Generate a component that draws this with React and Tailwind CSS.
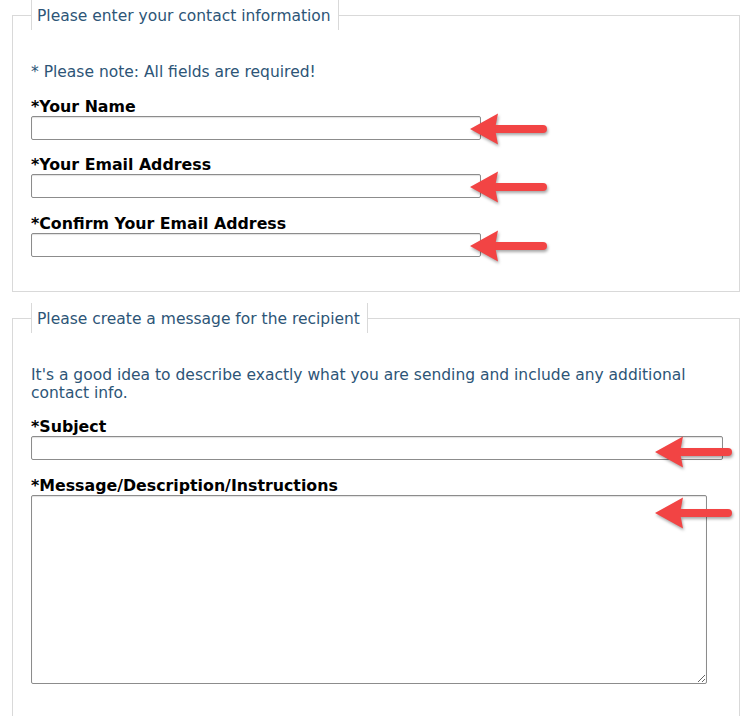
import { useState } from 'react'

const field =
  'block h-[24px] rounded-[2px] border border-[#8c8c8c] bg-white px-1 text-sm shadow-[inset_0_1px_1px_rgba(0,0,0,0.12)] focus:outline-none'

// red pointer drawn next to each required input
function Arrow({ className }) {
  return (
    <svg
      viewBox="0 0 80 32"
      className={`pointer-events-none absolute h-[32px] w-[80px] drop-shadow-[1px_2px_1.5px_rgba(0,0,0,0.35)] ${className}`}
    >
      <line x1="24" y1="16" x2="74" y2="16" stroke="#f24444" strokeWidth="8" strokeLinecap="round" />
      <path d="M1 16 L29 0.5 L26 16 L29 31.5 Z" fill="#f24444" />
    </svg>
  )
}

function Label({ children }) {
  return <label className="block text-[15.8px] font-bold leading-[18px] text-black">{children}</label>
}

function Legend({ children }) {
  return (
    <legend className="h-[30px] overflow-hidden border-x border-[#d9d9d9] pl-[5px] pr-[7px] pt-[2px] text-[15.5px] leading-[28px] text-[#2d5577]">
      {children}
    </legend>
  )
}

export default function App() {
  const [form, setForm] = useState({ name: '', email: '', confirm: '', subject: '', message: '' })
  const set = key => e => setForm({ ...form, [key]: e.target.value })

  return (
    <div className="min-h-screen bg-white pb-8 font-['DejaVu_Sans',Verdana,sans-serif]">
      {/* Contact info */}
      <fieldset className="ml-3 w-[728px] border border-[#d9d9d9] pb-[34px] pl-[18px] pr-4">
        <Legend>Please enter your contact information</Legend>
        <p className="mt-[33px] text-[15.5px] leading-[18px] text-[#2d5577]">* Please note: All fields are required!</p>

        <div className="mt-[17px]">
          <Label>*Your Name</Label>
          <div className="relative w-[450px]">
            <input type="text" value={form.name} onChange={set('name')} className={`${field} w-[450px]`} />
            <Arrow className="left-[438px] top-[-3px]" />
          </div>
        </div>

        <div className="mt-[16px]">
          <Label>*Your Email Address</Label>
          <div className="relative w-[450px]">
            <input type="text" value={form.email} onChange={set('email')} className={`${field} w-[450px]`} />
            <Arrow className="left-[438px] top-[-3px]" />
          </div>
        </div>

        <div className="mt-[17px]">
          <Label>*Confirm Your Email Address</Label>
          <div className="relative w-[450px]">
            <input type="text" value={form.confirm} onChange={set('confirm')} className={`${field} w-[450px]`} />
            <Arrow className="left-[438px] top-[-3px]" />
          </div>
        </div>
      </fieldset>

      {/* Message */}
      <fieldset className="ml-3 mt-[11px] w-[728px] border border-[#d9d9d9] pb-[33px] pl-[18px] pr-4">
        <Legend>Please create a message for the recipient</Legend>
        <p className="mt-[33px] pr-4 text-[15.5px] leading-[18px] text-[#2d5577]">
          It's a good idea to describe exactly what you are sending and include any additional contact info.
        </p>

        <div className="mt-4">
          <Label>*Subject</Label>
          <div className="relative">
            <input type="text" value={form.subject} onChange={set('subject')} className={`${field} w-full`} />
            <Arrow className="left-[623px] top-0" />
          </div>
        </div>

        <div className="mt-[17px]">
          <Label>*Message/Description/Instructions</Label>
          <div className="relative w-[676px]">
            <textarea
              value={form.message}
              onChange={set('message')}
              className="block h-[189px] w-[676px] rounded-[2px] border border-[#8c8c8c] bg-white p-1 text-sm shadow-[inset_0_1px_1px_rgba(0,0,0,0.12)] focus:outline-none"
            />
            <Arrow className="left-[623px] top-[2px]" />
          </div>
        </div>
      </fieldset>
    </div>
  )
}
